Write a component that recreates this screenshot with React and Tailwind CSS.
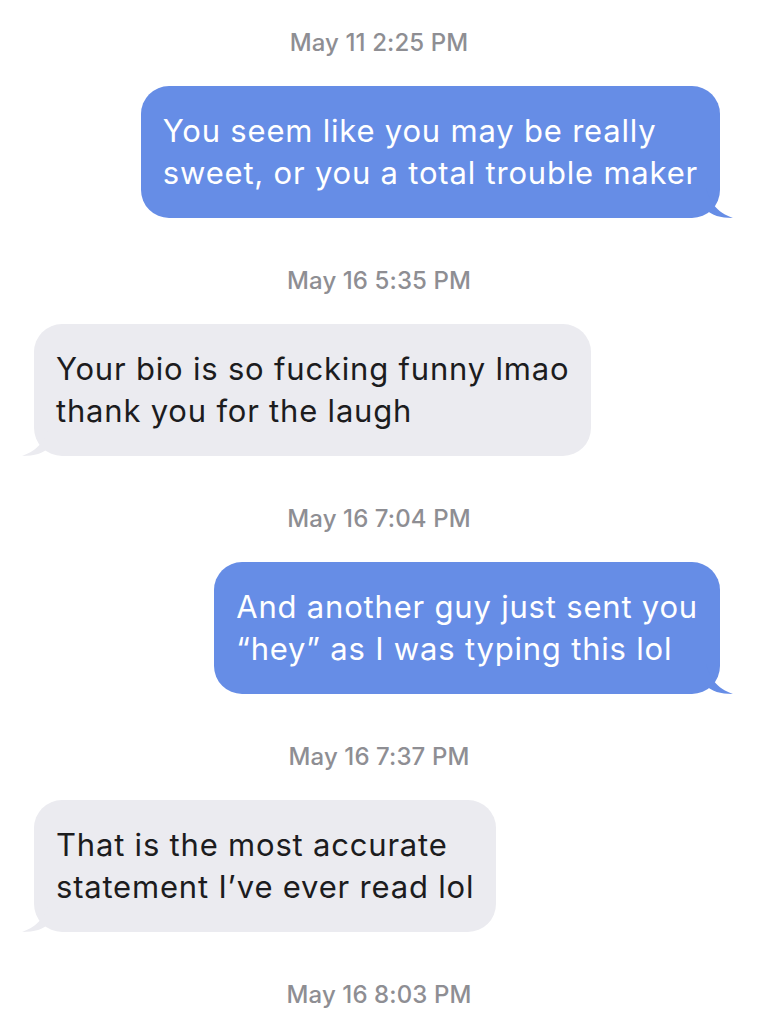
const messages = [
  { time: "May 11 2:25 PM", mine: true, lines: ["You seem like you may be really", "sweet, or you a total trouble maker"] },
  { time: "May 16 5:35 PM", mine: false, lines: ["Your bio is so fucking funny lmao", "thank you for the laugh"] },
  { time: "May 16 7:04 PM", mine: true, lines: ["And another guy just sent you", "\u201Chey\u201D as I was typing this lol"] },
  { time: "May 16 7:37 PM", mine: false, lines: ["That is the most accurate", "statement I\u2019ve ever read lol"] },
];

function Tail({ mine }) {
  if (mine) {
    return (
      <svg className="absolute bottom-0 right-[-14px]" width="28" height="30" viewBox="0 0 28 30">
        <path d="M0 0 C4 14 10 24 27 30 C14 30 6 27 0 22 Z" fill="#668de6" />
      </svg>
    );
  }
  return (
    <svg className="absolute bottom-0 left-[-13px]" width="28" height="30" viewBox="0 0 28 30">
      <path d="M28 0 C24 14 18 24 1 30 C14 30 22 27 28 22 Z" fill="#ebebf0" />
    </svg>
  );
}

function Bubble({ mine, lines }) {
  return (
    <div className={mine ? "flex justify-end pr-[38px]" : "flex justify-start pl-[34px]"}>
      <div
        className={
          "relative rounded-[28px] px-[22px] py-[24px] text-[31px] leading-[42px] tracking-[0.8px] whitespace-nowrap " +
          (mine ? "bg-[#668de6] text-white" : "bg-[#ebebf0] text-[#1c1c1e]")
        }
      >
        <Tail mine={mine} />
        <span className="relative">
          {lines[0]}
          <br />
          {lines[1]}
        </span>
      </div>
    </div>
  );
}

function Stamp({ children, className = "" }) {
  return (
    <p className={"text-center text-[24px] leading-[30px] font-medium tracking-[0.1px] text-[#8e8e93] " + className}>
      {children}
    </p>
  );
}

export default function App() {
  return (
    <div className="w-[758px] h-[1024px] overflow-hidden bg-white font-['Inter',sans-serif] pt-[28px]">
      {messages.map((m, i) => (
        <div key={i} className="mb-[48px]">
          <Stamp className="mb-[28px]">{m.time}</Stamp>
          <Bubble mine={m.mine} lines={m.lines} />
        </div>
      ))}
      <Stamp>May 16 8:03 PM</Stamp>
    </div>
  );
}
